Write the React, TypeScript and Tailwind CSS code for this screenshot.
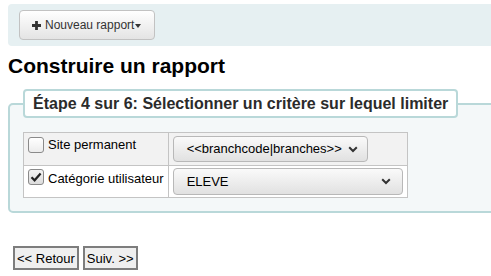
import React from 'react';

function Checkbox({ checked }: { checked?: boolean }) {
  return (
    <span
      className={`mt-[1px] flex h-4 w-4 shrink-0 items-center justify-center rounded-[3px] border border-[#8a8a8a] ${
        checked ? 'bg-linear-to-b from-[#f4f4f4] to-[#dcdcdc]' : 'bg-linear-to-b from-white to-[#ececec]'
      }`}
    >
      {checked && (
        <svg width="12" height="12" viewBox="0 0 12 12">
          <path d="M1.5 6.2 L4.6 9.3 L10.6 2.6" fill="none" stroke="#222" strokeWidth="2.2" />
        </svg>
      )}
    </span>
  );
}

function Chevron() {
  return (
    <svg width="10" height="7" viewBox="0 0 10 7" className="shrink-0">
      <path d="M1.2 1.2 L5 5 L8.8 1.2" fill="none" stroke="#333" strokeWidth="2" />
    </svg>
  );
}

export default function App() {
  return (
    <div className="h-[276px] w-[491px] overflow-hidden bg-white font-['Liberation_Sans',Arial,sans-serif] text-[13px] text-black">
      <div className="pl-2 pt-1">
        {/* Toolbar */}
        <div className="h-[42px] w-[520px] rounded-[4px] bg-[#e6f0f2] pl-[11px] pt-[6px]">
          <button className="flex h-[30px] w-[136px] items-center rounded-[4px] border border-[#c2c2c2] bg-linear-to-b from-white to-[#e4e4e4] pl-[12px] text-[12px] leading-none text-[#333]">
            <svg width="9" height="9" viewBox="0 0 9 9" className="mr-[4px]">
              <path d="M4.5 0 V9 M0 4.5 H9" stroke="#333" strokeWidth="2.8" />
            </svg>
            <span>Nouveau rapport</span>
            <span className="ml-[1px] mt-[1px] h-0 w-0 border-x-[3px] border-t-[4px] border-x-transparent border-t-[#333]" />
          </button>
        </div>

        <h1 className="mt-2 text-[21px] font-bold leading-[24px]">Construire un rapport</h1>

        <fieldset className="mt-[11px] w-[520px] rounded-[5px] border-2 border-[#b9d8d9] bg-[#f4f8f9] pb-[13px] pl-[13px] pt-[14px]">
          <legend className="rounded-[4px] border-2 border-[#b9d8d9] bg-white px-[8px] py-[3px] text-[16px] font-bold leading-[19px] text-[#2b2b2b]">
            Étape 4 sur 6: Sélectionner un critère sur lequel limiter
          </legend>
          <table className="w-[385px] border-collapse border border-[#c4c4c4]">
            <tbody>
              <tr className="bg-[#f2f2f2]">
                <td className="w-[144px] whitespace-nowrap border border-[#c4c4c4] px-[4px] py-[3px] align-top">
                  <label className="flex items-start gap-[4px] leading-[17px]">
                    <Checkbox />
                    <span>Site permanent</span>
                  </label>
                </td>
                <td className="border border-[#c4c4c4] px-[4px] py-[3px]">
                  <div className="flex h-[26px] w-[195px] items-center gap-[6px] rounded-[4px] border border-[#b8b8b8] bg-linear-to-b from-[#fafafa] to-[#e1e1e1] pl-[13px]">
                    <span>&lt;&lt;branchcode|branches&gt;&gt;</span>
                    <Chevron />
                  </div>
                </td>
              </tr>
              <tr className="bg-white">
                <td className="whitespace-nowrap border border-[#c4c4c4] px-[4px] py-[2px] align-top">
                  <label className="flex items-start gap-[4px] leading-[17px]">
                    <Checkbox checked />
                    <span className="mt-[2px]">Catégorie utilisateur</span>
                  </label>
                </td>
                <td className="border border-[#c4c4c4] px-[4px] py-[2px]">
                  <div className="flex h-[27px] w-[230px] items-center justify-between rounded-[4px] border border-[#b8b8b8] bg-linear-to-b from-[#fafafa] to-[#e1e1e1] pl-[13px] pr-[11px]">
                    <span>ELEVE</span>
                    <Chevron />
                  </div>
                </td>
              </tr>
            </tbody>
          </table>
        </fieldset>

        <div className="ml-[5px] mt-[33px] flex gap-[4px]">
          <button className="h-[24px] border-2 border-[#7d7d7d] bg-[#efefef] px-[2px] text-[13px] leading-none">
            &lt;&lt; Retour
          </button>
          <button className="h-[24px] border-2 border-[#7d7d7d] bg-[#efefef] px-[2px] text-[13px] leading-none">
            Suiv. &gt;&gt;
          </button>
        </div>
      </div>
    </div>
  );
}
